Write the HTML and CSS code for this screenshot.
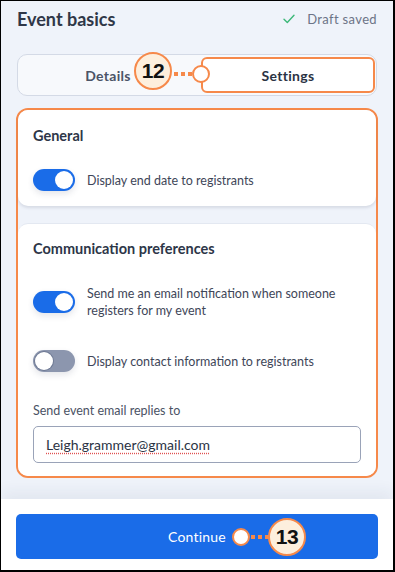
FILE: index.html
```html
<!DOCTYPE html>
<html>
<head>
<meta charset="utf-8">
<link rel="stylesheet" href="styles.css">
</head>
<body>
<div class="frame">
  <div class="main">
    <div class="header">
      <h1 class="title">Event basics</h1>
      <div class="saved">
        <svg class="check" width="12" height="10" viewBox="0 0 12 10"><path d="M1 5.2 L4.3 8.5 L11 1.3" fill="none" stroke="#3cb878" stroke-width="1.4" stroke-linecap="round" stroke-linejoin="round"/></svg>
        <span>Draft saved</span>
      </div>
    </div>
    <div class="tabs">
      <div class="tab">Details</div>
      <div class="tab active">Settings</div>
      <div class="callout c12">12</div>
      <div class="dots d12"></div>
      <div class="pin p12"></div>
    </div>
    <div class="group">
      <div class="card general">
        <h2 class="card-title">General</h2>
        <div class="row first">
          <span class="toggle on"><span class="knob"></span></span>
          <span class="row-text">Display end date to registrants</span>
        </div>
      </div>
      <div class="card comm">
        <h2 class="card-title">Communication preferences</h2>
        <div class="row first">
          <span class="toggle on"><span class="knob"></span></span>
          <span class="row-text">Send me an email notification when someone registers for my event</span>
        </div>
        <div class="row second">
          <span class="toggle off"><span class="knob"></span></span>
          <span class="row-text">Display contact information to registrants</span>
        </div>
        <div class="field-label">Send event email replies to</div>
        <div class="input"><span class="spell">Leigh.grammer@gmail.com</span></div>
      </div>
    </div>
  </div>
  <div class="footer">
    <div class="btn">
      <span>Continue</span>
      <span class="pin p13"></span>
      <span class="dots d13"></span>
      <span class="callout c13">13</span>
    </div>
  </div>
</div>
</body>
</html>
```
FILE: styles.css
```css
* { box-sizing: border-box; }
html, body { margin: 0; padding: 0; }
body {
  font-family: Lato, "Open Sans", "Liberation Sans", sans-serif;
  color: #2d3648;
}
.frame {
  width: 395px;
  height: 572px;
  border: 1px solid #000;
  border-right-width: 2px;
  border-bottom-width: 2px;
  background: #eff3fa;
  display: flex;
  flex-direction: column;
  overflow: hidden;
}
.main {
  flex: 1;
  padding: 0 15px 0 15px;
}
.header {
  display: flex;
  justify-content: space-between;
  align-items: center;
  height: 34px;
  padding: 1px 1px 0 1px;
}
.title {
  margin: 0;
  font-size: 18px;
  font-weight: 700;
  color: #2f3748;
}
.saved {
  display: flex;
  align-items: center;
  gap: 12px;
  font-size: 13px;
  letter-spacing: 0.35px;
  color: #6c7487;
}
.check { display: block; }
.tabs {
  position: relative;
  margin: 19px 1px 0 1px;
  height: 42px;
  border: 1px solid #d4dae6;
  border-radius: 10px;
  background: #f7f9fc;
  display: flex;
  padding: 2px 1px 2px 2px;
}
.tab {
  flex: 0 0 178px;
  display: flex;
  align-items: center;
  justify-content: center;
  font-size: 14px;
  font-weight: 700;
  letter-spacing: 0.3px;
  color: #4b5467;
  padding-right: 2px;
}
.tab.active {
  flex: 1 1 auto;
  background: #fff;
  border: 2px solid #f6894a;
  border-radius: 6px;
  color: #2b3344;
  padding-right: 0;
  margin-left: 3px;
}
.callout {
  position: absolute;
  width: 38px;
  height: 38px;
  border-radius: 50%;
  background: #fdefdd;
  border: 2.5px solid #f6894a;
  display: flex;
  align-items: center;
  justify-content: center;
  font-family: "Liberation Sans", Arial, sans-serif;
  font-weight: 700;
  font-size: 21px;
  color: #111;
  letter-spacing: -0.5px;
}
.pin {
  position: absolute;
  width: 18px;
  height: 18px;
  border-radius: 50%;
  background: #fff;
  border: 2.5px solid #f6894a;
}
.dots {
  position: absolute;
  height: 4px;
  background-image: linear-gradient(90deg, #f6894a 0 4px, transparent 4px 7px);
  background-size: 7px 4px;
  background-repeat: repeat-x;
}
.c12 { left: 116px; top: -3px; }
.d12 { left: 156px; top: 17px; width: 18px; }
.p12 { left: 174px; top: 10px; }
.group {
  margin-top: 12px;
  border: 2px solid #f6894a;
  border-radius: 12px;
  height: 370px;
  display: flex;
  flex-direction: column;
  gap: 17px;
}
.card {
  background: #fff;
  border-radius: 10px;
  padding: 0 15px;
  box-shadow: 0 2px 3px rgba(40, 50, 80, 0.12);
}
.card.general {
  height: 96px;
  padding-top: 16px;
}
.card.comm {
  flex: 1;
  padding-top: 15px;
  border-top: 1px solid #e3e8f1;
  box-shadow: none;
}
.card-title {
  margin: 0;
  font-size: 14.5px;
  font-weight: 700;
  line-height: 20px;
  color: #2d3648;
}
.row {
  display: flex;
  align-items: center;
  gap: 12px;
}
.general .row.first { margin-top: 23px; }
.comm .row.first { margin-top: 26px; }
.comm .row.second { margin-top: 31px; }
.row-text {
  font-size: 12.5px;
  line-height: 17px;
  color: #3e4658;
}
.toggle {
  flex: none;
  width: 42px;
  height: 22px;
  border-radius: 11px;
  position: relative;
  box-shadow: 0 3px 6px rgba(40, 50, 80, 0.12);
}
.toggle.on { background: #1a6ce8; }
.toggle.off { background: #8c96ae; }
.knob {
  position: absolute;
  top: 2px;
  width: 18px;
  height: 18px;
  border-radius: 50%;
  background: #fff;
}
.toggle.on .knob { right: 2px; }
.toggle.off .knob { left: 2px; box-shadow: 0 0 0 1px #6f7a95; }
.field-label {
  margin-top: 30px;
  font-size: 12.5px;
  line-height: 18px;
  color: #4a5264;
}
.input {
  margin-top: 6px;
  height: 37px;
  border: 1px solid #9aa3b8;
  border-radius: 5px;
  display: flex;
  align-items: center;
  padding-left: 12px;
  font-size: 14px;
  color: #2b3344;
}
.spell {
  text-decoration: underline dotted #e05050;
  text-underline-offset: 3px;
}
.footer {
  height: 71px;
  background: #fff;
  padding: 15px 15px 0 15px;
  box-shadow: 0 -8px 14px rgba(40, 50, 80, 0.06);
}
.btn {
  position: relative;
  height: 45px;
  background: #1a6ce8;
  border-radius: 5px;
  display: flex;
  align-items: center;
  justify-content: center;
  color: #fff;
  font-size: 14px;
  letter-spacing: 0.2px;
}
.p13 { left: 216px; top: 14px; }
.d13 { left: 235px; top: 21px; width: 18px; }
.c13 { left: 252px; top: 4px; }
```
